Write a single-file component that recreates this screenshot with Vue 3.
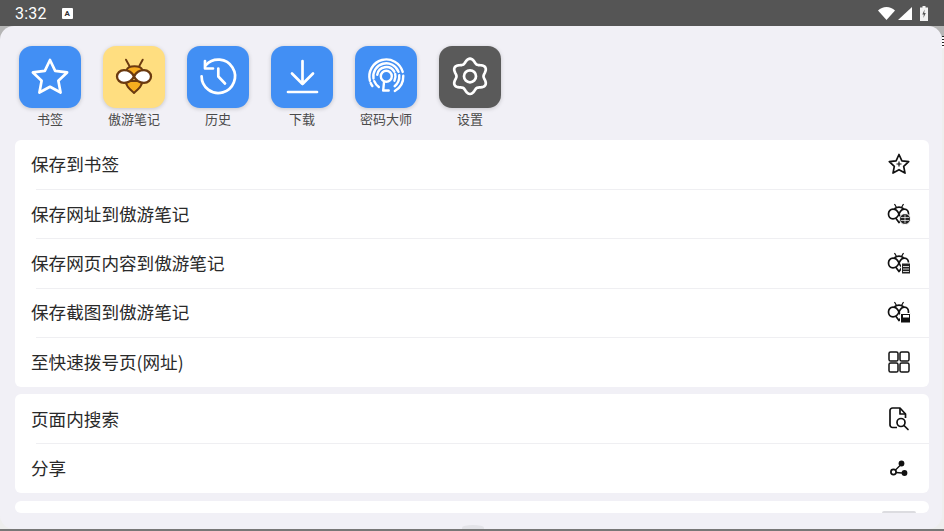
<script setup>
const apps = [
  { id: 'star', label: '书签', tone: 'blue' },
  { id: 'bee', label: '傲游笔记', tone: 'yellow' },
  { id: 'history', label: '历史', tone: 'blue' },
  { id: 'download', label: '下载', tone: 'blue' },
  { id: 'finger', label: '密码大师', tone: 'blue' },
  { id: 'gear', label: '设置', tone: 'dark' },
]
const group1 = [
  { label: '保存到书签', icon: 'star' },
  { label: '保存网址到傲游笔记', icon: 'beeLink' },
  { label: '保存网页内容到傲游笔记', icon: 'beeDoc' },
  { label: '保存截图到傲游笔记', icon: 'beeShot' },
  { label: '至快速拨号页(网址)', icon: 'grid' },
]
const group2 = [
  { label: '页面内搜索', icon: 'search' },
  { label: '分享', icon: 'share' },
]

const rad = (deg) => (deg * Math.PI) / 180
const polar = (cx, cy, r, deg) => [cx + r * Math.sin(rad(deg)), cy - r * Math.cos(rad(deg))]

function arc(cx, cy, r, from, to) {
  const [x0, y0] = polar(cx, cy, r, from)
  const [x1, y1] = polar(cx, cy, r, to)
  const large = to - from > 180 ? 1 : 0
  return `M${x0.toFixed(2)} ${y0.toFixed(2)}A${r} ${r} 0 ${large} 1 ${x1.toFixed(2)} ${y1.toFixed(2)}`
}

function star(cx, cy, R, r) {
  const pts = []
  for (let i = 0; i < 10; i++) {
    const [x, y] = polar(cx, cy, i % 2 ? r : R, i * 36)
    pts.push(`${x.toFixed(2)} ${y.toFixed(2)}`)
  }
  return `M${pts.join('L')}z`
}

function gear(cx, cy) {
  const pts = []
  for (let d = 0; d < 360; d += 4) {
    const r = 15.6 + 2.1 * Math.cos(rad(6 * d))
    const [x, y] = polar(cx, cy, r, d)
    pts.push(`${x.toFixed(2)} ${y.toFixed(2)}`)
  }
  return `M${pts.join('L')}z`
}

const starPath = star(31, 32, 18, 8.8)
const gearPath = gear(31, 30.3)
const historyArc = arc(31.3, 30.3, 16.7, -48, 270)
const fingerArcs = [
  [17, -105, 75], [17, 88, 150], [17, -125, -113],
  [13, -100, 70], [13, 85, 140], [13, -145, -112],
  [9.2, -80, 60], [9.2, 75, 118],
].map(([r, a, b]) => arc(31.3, 30.3, r, a, b))
</script>

<template>
  <div class="screen">
    <header class="status">
      <div class="status-left">
        <span class="time">3:32</span>
        <span class="a-badge">A</span>
      </div>
      <div class="status-right">
        <svg width="17" height="13" viewBox="0 0 17 13"><path d="M0 3.500C2.300 1.200 5.300 0 8.500 0s6.200 1.200 8.500 3.500L8.500 13z" fill="#fff" /></svg>
        <svg width="14" height="13" viewBox="0 0 14 13"><path d="M14 0v13H0z" fill="#fff" /></svg>
        <svg class="battery" width="8" height="15" viewBox="0 0 8 15"><path d="M2.500 0h3v1.500H8V15H0V1.500h2.500z" fill="#f2f2f2" /><path d="M4.600 3.500 2.300 8.500h1.500l-.4 3.500L5.800 7H4.200z" fill="#555" /></svg>
      </div>
    </header>

    <main class="stage">
      <span class="edge-marks"></span>
      <div class="sheet">
        <section class="apps">
          <div v-for="app in apps" :key="app.id" class="app">
            <div class="tile" :class="app.tone">
              <svg v-if="app.id === 'star'" width="62" height="62" viewBox="0 0 62 62" fill="none" stroke="#fff" stroke-width="2.700" stroke-linejoin="round">
                <path :d="starPath" />
              </svg>
              <svg v-else-if="app.id === 'bee'" width="62" height="62" viewBox="0 0 62 62">
                <path d="M23 13.700l3.300 6M39.700 13.700l-3.300 6" stroke="#6b3a10" stroke-width="1.900" stroke-linecap="round" />
                <path d="M23.500 24c2-5 14-5 16 0l-3 6h-10z" fill="#f7ad1f" stroke="#6b3a10" stroke-width="2" stroke-linejoin="round" />
                <path d="M23 35h16c1 4.500-4 8.500-8 12-4-3.500-9-7.500-8-12z" fill="#f7ad1f" stroke="#6b3a10" stroke-width="2" stroke-linejoin="round" />
                <path d="M31 30.500c-2-4.200-6-6.300-10-6.300-4.200 0-7 3-7 6.300s2.800 6.300 7 6.300c4 0 8-2.100 10-6.300z" fill="#fff" stroke="#6b3a10" stroke-width="2.300" stroke-linejoin="round" />
                <path d="M31 30.500c2-4.200 6-6.300 10-6.300 4.200 0 7 3 7 6.300s-2.800 6.300-7 6.300c-4 0-8-2.100-10-6.300z" fill="#fff" stroke="#6b3a10" stroke-width="2.300" stroke-linejoin="round" />
              </svg>
              <svg v-else-if="app.id === 'history'" width="62" height="62" viewBox="0 0 62 62" fill="none" stroke="#fff" stroke-width="2.700" stroke-linecap="round" stroke-linejoin="round">
                <path :d="historyArc" />
                <path d="M18 15v7.500h8" />
                <path d="M31.300 22.500v8l6.700 7" />
              </svg>
              <svg v-else-if="app.id === 'download'" width="62" height="62" viewBox="0 0 62 62" fill="none" stroke="#fff" stroke-width="2.700" stroke-linecap="round" stroke-linejoin="round">
                <path d="M31.500 15v23M21 27.500 31.500 38 42 27.500" />
                <path d="M17 46h29" />
              </svg>
              <svg v-else-if="app.id === 'finger'" width="62" height="62" viewBox="0 0 62 62" fill="none" stroke="#fff" stroke-width="2.400" stroke-linecap="round" stroke-linejoin="round">
                <path v-for="d in fingerArcs" :key="d" :d="d" />
                <circle cx="31.300" cy="30.300" r="5.500" fill="#428ff4" />
                <path d="M29 36l-.8 8.500h5.500" />
              </svg>
              <svg v-else-if="app.id === 'gear'" width="62" height="62" viewBox="0 0 62 62" fill="none" stroke="#fff" stroke-width="2.700" stroke-linejoin="round">
                <path :d="gearPath" />
                <circle cx="31" cy="30.300" r="6" />
              </svg>
            </div>
            <span class="app-label">{{ app.label }}</span>
          </div>
        </section>

        <section class="card">
          <div v-for="row in group1" :key="row.label" class="row">
            <span class="row-label">{{ row.label }}</span>
            <svg class="row-icon" width="24" height="24" viewBox="0 0 24 24" fill="none" stroke="#111" stroke-width="1.700" stroke-linejoin="round">
              <template v-if="row.icon === 'star'">
                <path d="M12 2.500l2.900 6.300 6.800.8-5 4.700 1.300 6.800-6-3.400-6 3.400 1.300-6.800-5-4.700 6.800-.8z" />
                <path d="M12 9.500v5M9.500 12h5" stroke-width="1.200" />
              </template>
              <template v-else-if="row.icon === 'grid'">
                <rect x="2" y="2" width="9" height="9" rx="1.600" stroke-width="1.500" />
                <rect x="13" y="2" width="9" height="9" rx="1.600" stroke-width="1.500" />
                <rect x="2" y="13" width="9" height="9" rx="1.600" stroke-width="1.500" />
                <rect x="13" y="13" width="9" height="9" rx="1.600" stroke-width="1.500" />
              </template>
              <template v-else>
                <path d="M9.500 5.500 7.500 2M14.500 5.500 16.500 2" stroke-width="1.200" />
                <path d="M8 6.500c2-1.800 6-1.800 8 0l2 6-6 8-6-8z" />
                <path d="M12 12c-1.300-3-3.200-4.800-6-4.800-2.800 0-4.500 2.200-4.500 4.800s1.700 4.800 4.500 4.800c2.800 0 4.700-1.800 6-4.800z" fill="#fff" />
                <path d="M12 12c1.300-3 3.200-4.800 5.500-4.800 2.500 0 4 2.200 4 4.800s-1.500 4.800-4 4.800c-2.300 0-4.200-1.800-5.500-4.800z" fill="#fff" />
                <g v-if="row.icon === 'beeLink'">
                  <circle cx="18" cy="17" r="5.500" fill="#222" stroke="#fff" stroke-width="1" />
                  <path d="M14 15.500h8M14 18.500h8M18 12.500v9" stroke="#fff" stroke-width=".7" />
                </g>
                <g v-else-if="row.icon === 'beeDoc'">
                  <rect x="14.500" y="12" width="9" height="11" fill="#222" stroke="#fff" stroke-width="1" />
                  <path d="M16 15.500h6M16 18h6M16 20.500h6" stroke="#fff" stroke-width=".8" />
                </g>
                <g v-else>
                  <rect x="13.500" y="13.500" width="10" height="9.500" fill="#111" stroke="#fff" stroke-width="1" />
                  <path d="M16 15h6v2.500h-6z" fill="#fff" stroke="none" />
                </g>
              </template>
            </svg>
          </div>
        </section>

        <section class="card">
          <div v-for="row in group2" :key="row.label" class="row">
            <span class="row-label">{{ row.label }}</span>
            <svg class="row-icon" width="24" height="24" viewBox="0 0 24 24" fill="none" stroke="#111" stroke-width="1.700" stroke-linejoin="round">
              <template v-if="row.icon === 'search'">
                <path d="M10 20.500H5.500A2.500 2.500 0 0 1 3 18V3.500A2.500 2.500 0 0 1 5.500 1H13l5.500 6v4" />
                <path d="M13 1v6h5.500" />
                <circle cx="14" cy="15.500" r="4" fill="#fff" />
                <path d="M17 18.500l4 4" stroke-linecap="round" />
              </template>
              <template v-else>
                <circle cx="6.500" cy="16" r="2.600" />
                <circle cx="14.500" cy="7.500" r="2.900" fill="#111" stroke="none" />
                <circle cx="17.500" cy="17" r="2.900" fill="#111" stroke="none" />
                <path d="M8.500 14 13 9.500M9 16.500l6 .5" stroke-width="1.300" />
              </template>
            </svg>
          </div>
        </section>

        <section class="card peek"><span class="peek-btn"></span></section>
        <span class="handle"></span>
      </div>
      <div class="under"></div>
    </main>
  </div>
</template>

<style scoped>
.screen {
  width: 944px;
  height: 531px;
  overflow: hidden;
  display: flex;
  flex-direction: column;
  font-family: "Noto Sans CJK SC", "Noto Sans", sans-serif;
}
.status {
  height: 26px;
  flex: none;
  background: #555555;
  color: #fff;
  display: flex;
  align-items: center;
  justify-content: space-between;
  padding: 1px 16px 0 15px;
  box-sizing: border-box;
}
.status-left { display: flex; align-items: center; gap: 15px; }
.time { font: 16px/1 Roboto, sans-serif; letter-spacing: .2px; }
.a-badge {
  width: 11px;
  height: 11px;
  background: #fff;
  color: #333;
  border-radius: 1px;
  font: 700 8px/11px Roboto, sans-serif;
  text-align: center;
}
.status-right { display: flex; align-items: center; gap: 3px; }
.battery { margin-left: 5px; }
.stage {
  flex: 1;
  display: flex;
  flex-direction: column;
  min-height: 0;
  padding-right: 2px;
  position: relative;
  background: linear-gradient(#b5b5b5 0, #b5b5b5 10px, #eeeeee 22px);
}
.edge-marks {
  position: absolute;
  right: 0;
  top: 10px;
  width: 2px;
  height: 12px;
  background: repeating-linear-gradient(#222 0 1px, #fff 1px 3px);
}
.sheet {
  height: 503px;
  flex: none;
  position: relative;
  box-sizing: border-box;
  background: #f1f0f6;
  border-radius: 14px;
  padding: 20px 13px 0 15px;
  overflow: hidden;
}
.under { flex: 1; background: #777777; margin-right: -2px; }
.apps { display: flex; height: 93.600px; padding-left: 4px; }
.app { width: 84px; display: flex; flex-direction: column; align-items: flex-start; }
.tile {
  width: 62px;
  height: 62px;
  border-radius: 13px;
  display: flex;
  align-items: center;
  justify-content: center;
  box-shadow: 0 1px 4px rgba(0, 0, 0, .18);
}
.blue { background: #428ff4; }
.yellow { background: #ffde80; }
.dark { background: #5a5a5a; }
.app-label {
  width: 62px;
  margin-top: 2px;
  text-align: center;
  white-space: nowrap;
  font-size: 13px;
  line-height: 18px;
  color: #4a4a4a;
}
.card {
  background: #fff;
  border-radius: 6px;
  margin-bottom: 7.400px;
  overflow: hidden;
}
.row {
  height: 49.400px;
  display: flex;
  align-items: center;
  justify-content: space-between;
  padding: 0 18px 0 16px;
  position: relative;
}
.row + .row::before {
  content: "";
  position: absolute;
  top: 0;
  left: 21px;
  right: 0;
  height: 1px;
  background: #efeff2;
}
.row-label { font-size: 17.600px; line-height: 24px; color: #2a2a2a; }
.row-icon { flex: none; }
.peek {
  height: 12.500px;
  margin-top: 8px;
  position: relative;
}
.peek-btn {
  position: absolute;
  right: 13px;
  bottom: 0;
  width: 34px;
  height: 2px;
  border-radius: 12px 12px 0 0;
  background: #dcdce0;
}
.handle {
  position: absolute;
  left: 462px;
  bottom: -1px;
  width: 22px;
  height: 5px;
  border-radius: 50% 50% 0 0;
  background: #e3e3e8;
}
</style>
